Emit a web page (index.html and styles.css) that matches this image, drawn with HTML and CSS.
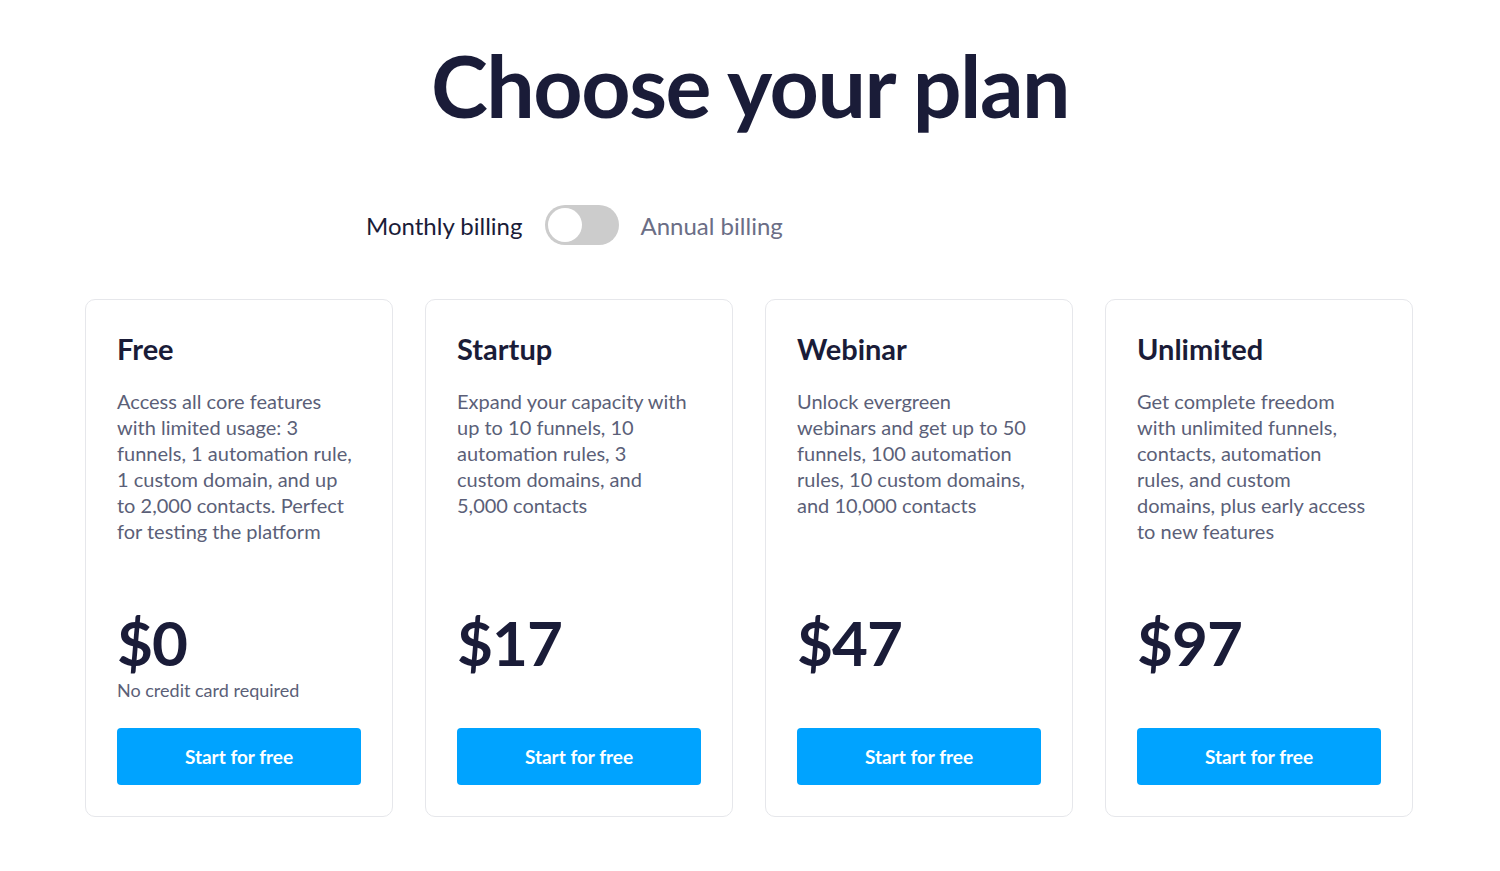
FILE: index.html
```html
<!DOCTYPE html>
<html lang="en">
<head>
<meta charset="utf-8">
<title>Choose your plan</title>
<link rel="stylesheet" href="styles.css">
</head>
<body>
<main class="page">
  <h1 class="title">Choose your plan</h1>
  <div class="billing">
    <span class="billing-label active">Monthly billing</span>
    <span class="toggle"><span class="knob"></span></span>
    <span class="billing-label">Annual billing</span>
  </div>
  <section class="plans">
    <article class="card">
      <h2 class="plan-name">Free</h2>
      <p class="plan-desc">Access all core features<br>with limited usage: 3<br>funnels, 1 automation rule,<br>1 custom domain, and up<br>to 2,000 contacts. Perfect<br>for testing the platform</p>
      <div class="price-block">
        <div class="price">$0</div>
        <div class="note">No credit card required</div>
      </div>
      <button class="cta">Start for free</button>
    </article>
    <article class="card">
      <h2 class="plan-name">Startup</h2>
      <p class="plan-desc">Expand your capacity with<br>up to 10 funnels, 10<br>automation rules, 3<br>custom domains, and<br>5,000 contacts</p>
      <div class="price-block">
        <div class="price">$17</div>
      </div>
      <button class="cta">Start for free</button>
    </article>
    <article class="card">
      <h2 class="plan-name">Webinar</h2>
      <p class="plan-desc">Unlock evergreen<br>webinars and get up to 50<br>funnels, 100 automation<br>rules, 10 custom domains,<br>and 10,000 contacts</p>
      <div class="price-block">
        <div class="price">$47</div>
      </div>
      <button class="cta">Start for free</button>
    </article>
    <article class="card">
      <h2 class="plan-name">Unlimited</h2>
      <p class="plan-desc">Get complete freedom<br>with unlimited funnels,<br>contacts, automation<br>rules, and custom<br>domains, plus early access<br>to new features</p>
      <div class="price-block">
        <div class="price">$97</div>
      </div>
      <button class="cta">Start for free</button>
    </article>
  </section>
</main>
</body>
</html>
```

FILE: styles.css
```css
* { box-sizing: border-box; }
body {
  margin: 0;
  background: #ffffff;
  font-family: "Lato", "Inter", sans-serif;
  color: #1a1c38;
}
.page {
  padding-top: 33px;
}
.title {
  margin: 0;
  text-align: center;
  font-size: 86px;
  line-height: 104px;
  font-weight: 700;
  letter-spacing: -1.5px;
  color: #1a1c38;
}
.billing {
  display: flex;
  align-items: center;
  gap: 22px;
  padding-left: 366px;
  margin-top: 68px;
  height: 40px;
}
.billing-label {
  font-size: 24px;
  color: #6b6e86;
}
.billing-label.active {
  color: #1a1c38;
}
.toggle {
  width: 74px;
  height: 40px;
  border-radius: 20px;
  background: #cccccc;
  padding: 3px;
  display: flex;
}
.knob {
  width: 34px;
  height: 34px;
  border-radius: 50%;
  background: #ffffff;
}
.plans {
  display: grid;
  grid-template-columns: repeat(4, 308px);
  gap: 32px;
  justify-content: center;
  margin-top: 54px;
  padding-right: 2px;
}
.card {
  height: 518px;
  border: 1px solid #e6e7eb;
  border-radius: 10px;
  padding: 29px 31px 31px;
  display: flex;
  flex-direction: column;
}
.plan-name {
  margin: 0;
  font-size: 29px;
  line-height: 40px;
  font-weight: 700;
  color: #1a1c38;
}
.plan-desc {
  margin: 19px 0 0;
  font-size: 20px;
  line-height: 26px;
  color: #5b5f78;
  flex: 1;
}
.price-block {
  height: 119px;
}
.price {
  font-size: 62px;
  line-height: 66px;
  font-weight: 700;
  letter-spacing: -1px;
  color: #1a1c38;
}
.note {
  margin-top: 3px;
  font-size: 18px;
  line-height: 24px;
  color: #5b5f78;
}
.cta {
  display: block;
  width: 244px;
  height: 57px;
  border: none;
  border-radius: 4px;
  background: #00a3ff;
  color: #ffffff;
  font-family: inherit;
  font-size: 19px;
  font-weight: 700;
  cursor: pointer;
}
```
